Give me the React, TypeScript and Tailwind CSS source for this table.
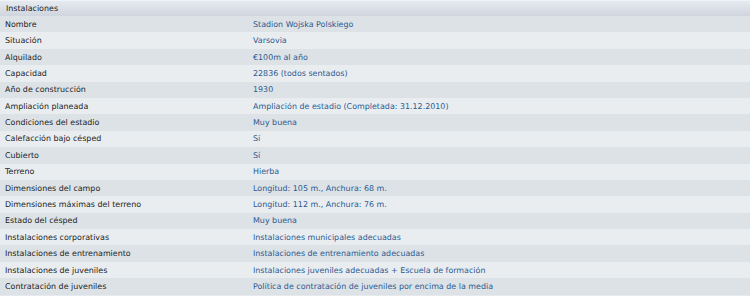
import React from "react";

const rows: [string, string][] = [
  ["Nombre", "Stadion Wojska Polskiego"],
  ["Situación", "Varsovia"],
  ["Alquilado", "€100m al año"],
  ["Capacidad", "22836 (todos sentados)"],
  ["Año de construcción", "1930"],
  ["Ampliación planeada", "Ampliación de estadio (Completada: 31.12.2010)"],
  ["Condiciones del estadio", "Muy buena"],
  ["Calefacción bajo césped", "Sí"],
  ["Cubierto", "Sí"],
  ["Terreno", "Hierba"],
  ["Dimensiones del campo", "Longitud: 105 m., Anchura: 68 m."],
  ["Dimensiones máximas del terreno", "Longitud: 112 m., Anchura: 76 m."],
  ["Estado del césped", "Muy buena"],
  ["Instalaciones corporativas", "Instalaciones municipales adecuadas"],
  ["Instalaciones de entrenamiento", "Instalaciones de entrenamiento adecuadas"],
  ["Instalaciones de juveniles", "Instalaciones juveniles adecuadas + Escuela de formación"],
  ["Contratación de juveniles", "Política de contratación de juveniles por encima de la media"],
];

export default function App() {
  return (
    <div className="w-[750px] h-[296px] overflow-hidden bg-[#e6eaee] font-['DejaVu_Sans',sans-serif] text-[7.95px]">
      {/* Section header */}
      <div className="h-[16px] flex items-center px-[6px] pt-[1px] border-t border-[#f0f2f5] bg-gradient-to-b from-[#e6eaf0] to-[#cfd5de] text-[#222]">
        Instalaciones
      </div>

      {rows.map(([label, value], i) => (
        <div
          key={label}
          className={`h-[16.4px] flex items-center pt-[1px] ${
            i % 2 === 0 ? "bg-[#dde2e6]" : "bg-[#e9edf0]"
          }`}
        >
          <div className="w-[253px] pl-[5px] text-[#222]">{label}</div>
          <div className="flex-1 text-[#2b5a92]">{value}</div>
        </div>
      ))}
    </div>
  );
}
